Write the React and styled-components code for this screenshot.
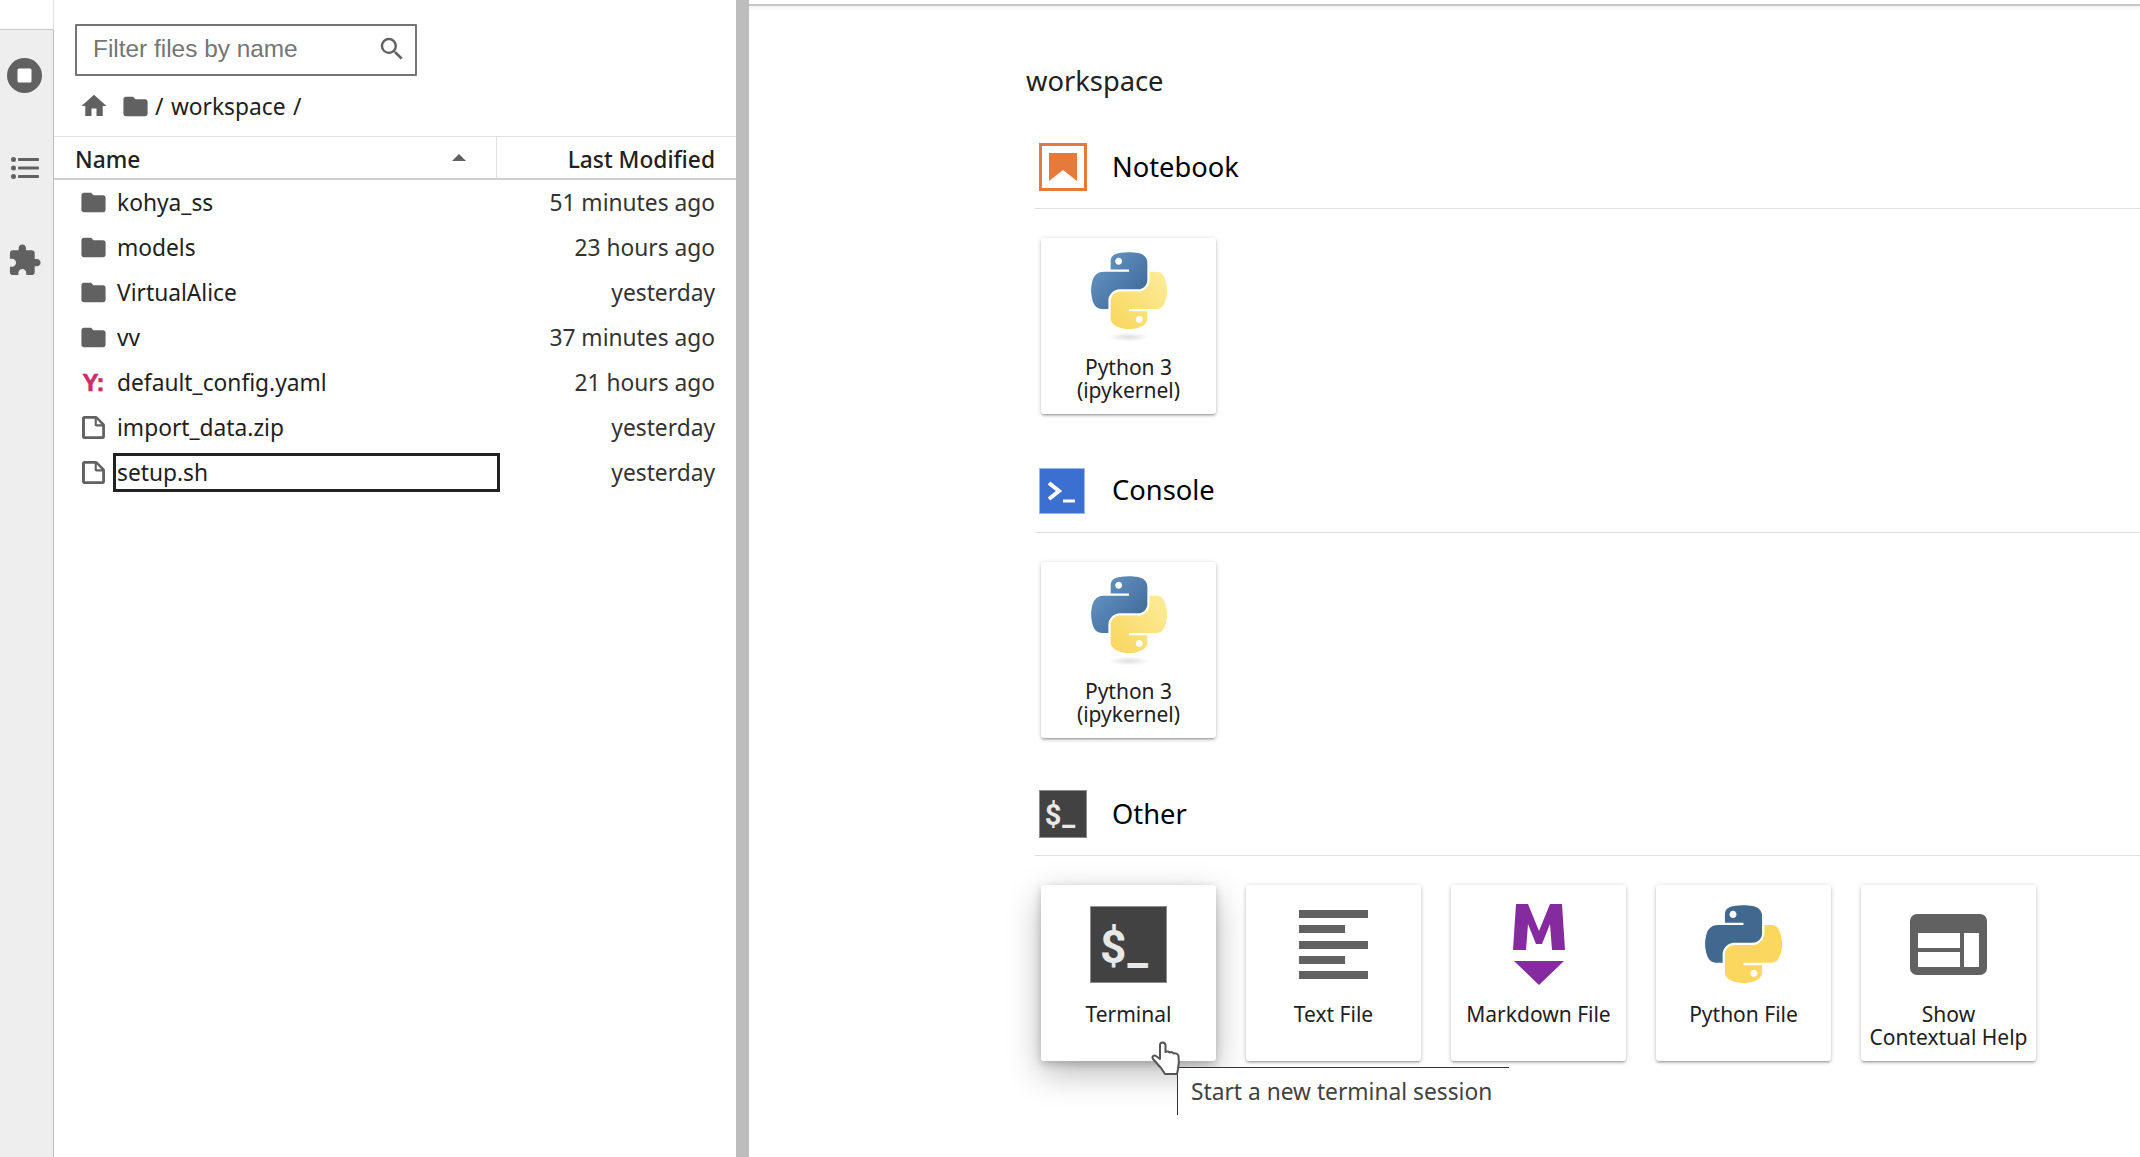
import React from 'react'
import styled, { createGlobalStyle } from 'styled-components'

const GlobalStyle = createGlobalStyle`
html, body {
  margin: 0;
  height: 100%;
  overflow: hidden;
  background: #fff;
}
#root {
  height: 100%;
}
* {
  box-sizing: border-box;
}
`

const Shell = styled.div`
display: flex;
height: 100vh;
font-family: "Noto Sans", "Liberation Sans", sans-serif;
color: #212121;
`

const SideBar = styled.div`
width: 54px;
flex: none;
display: flex;
flex-direction: column;
`
const SideTop = styled.div`
height: 30px;
flex: none;
border-right: 1px solid #e0e0e0;
border-bottom: 1px solid #c8c8c8;
`
const SideTabs = styled.div`
flex: 1;
background: #eeeeee;
border-right: 1px solid #bdbdbd;
display: flex;
flex-direction: column;
align-items: center;
padding: 28px 4px 0 0;
gap: 64px;
color: #616161;
`

const FilePanel = styled.div`
width: 682px;
flex: none;
display: flex;
flex-direction: column;
`
const FilterBox = styled.div`
width: 342px;
height: 52px;
margin: 24px 0 0 21px;
border: 2px solid #757575;
border-radius: 1px;
display: flex;
align-items: center;
justify-content: space-between;
padding: 0 8px 2px 16px;
font-family: "Liberation Sans", Arial, sans-serif;
font-size: 24.4px;
color: #757575;
`
const SearchGlyph = styled.span`
display: flex;
color: #616161;
`
const Crumbs = styled.div`
height: 60px;
display: flex;
align-items: center;
gap: 12px;
padding-left: 25px;
font-size: 22.75px;
color: #212121;
svg {
  color: #616161;
}
`
const CrumbPath = styled.span`
margin-left: -7px;
word-spacing: 1.5px;
`
const TableHead = styled.div`
height: 44px;
display: flex;
border-top: 1px solid #e0e0e0;
border-bottom: 2px solid #cfcfcf;
font-size: 22.75px;
font-weight: 500;
`
const NameHead = styled.div`
width: 443px;
flex: none;
display: flex;
align-items: center;
justify-content: space-between;
padding: 3px 30px 0 21px;
border-right: 1px solid #e0e0e0;
`
const SortCaret = styled.span`
width: 0;
height: 0;
margin-top: -4px;
border-left: 7px solid transparent;
border-right: 7px solid transparent;
border-bottom: 7px solid #616161;
`
const ModifiedHead = styled.div`
flex: 1;
display: flex;
align-items: center;
justify-content: flex-end;
padding: 3px 21px 0 0;
`
const FileList = styled.div`
display: flex;
flex-direction: column;
`
const FileRow = styled.div`
height: 45px;
display: flex;
align-items: center;
padding: 0 21px 0 25px;
font-size: 22.75px;
color: #212121;
`
const RowIcon = styled.span`
width: 29px;
height: 29px;
flex: none;
display: flex;
align-items: center;
justify-content: center;
color: #616161;
`
const YamlGlyph = styled.span`
font-family: "Liberation Sans", Arial, sans-serif;
font-weight: 700;
font-size: 24px;
line-height: 1;
color: #cb2e63;
-webkit-text-stroke: 0.6px #cb2e63;
`
const FileName = styled.span`
width: 387px;
height: 39px;
flex: none;
margin-left: 5px;
display: flex;
align-items: center;
padding-left: 1px;
border: 3px solid ${({ $focused }) => ($focused ? '#222' : 'transparent')};
`
const FileDate = styled.span`
flex: 1;
text-align: right;
color: #333;
`

const Splitter = styled.div`
width: 13px;
flex: none;
background: #bdbdbd;
`

const Launcher = styled.main`
flex: 1;
min-width: 0;
margin-top: 4px;
border-top: 2px solid #c6c6c6;
box-shadow: inset 0 4px 4px -3px rgba(0, 0, 0, 0.08);
padding-left: 286px;
`
const Cwd = styled.div`
margin: 52px 0 0 -9px;
height: 45px;
display: flex;
align-items: center;
font-size: 27.3px;
line-height: 45px;
color: #212121;
`
const Section = styled.section`
margin-bottom: 52.5px;
&:first-of-type {
  margin-top: 40px;
}
`
const SectionHead = styled.div`
display: flex;
align-items: center;
gap: 25px;
height: 66px;
padding: 0 0 17px 4px;
border-bottom: 1px solid #e0e0e0;
`
const SectionTitle = styled.h2`
margin: -2px 0 0;
font-size: 27.3px;
font-weight: 400;
color: #000;
`
const CardRow = styled.div`
display: flex;
gap: 30px;
padding: 29px 0 0 6px;
`
const Card = styled.div`
position: relative;
width: 175px;
height: 176px;
flex: none;
display: flex;
flex-direction: column;
align-items: center;
background: #fff;
border-radius: 3px;
box-shadow: ${({ $hover }) =>
  $hover
    ? '0 12px 34px rgba(0,0,0,.28), 0 3px 8px rgba(0,0,0,.2)'
    : '0 1px 5px rgba(0,0,0,.2), 0 2px 2px rgba(0,0,0,.14), 0 3px 1px -2px rgba(0,0,0,.12)'};
`
const CardIcon = styled.div`
height: 118px;
flex: none;
display: flex;
align-items: center;
justify-content: center;
`
const CardLabel = styled.div`
width: 100%;
text-align: center;
font-size: 21px;
line-height: 23px;
color: #212121;
white-space: pre-line;
`
const TerminalTile = styled.div`
display: flex;
align-items: flex-end;
justify-content: center;
width: ${({ $size }) => $size}px;
height: ${({ $size }) => $size}px;
padding-right: ${({ $size }) => Math.round($size * 0.1)}px;
background: #424242;
border: 1px solid #8d8d8d;
color: #e8e8e8;
font-family: Roboto, "Liberation Sans", sans-serif;
font-weight: 700;
font-size: ${({ $size }) => Math.round($size * 0.6)}px;
line-height: ${({ $size }) => Math.round($size * 0.89)}px;
letter-spacing: 1px;
`
const ConsoleTile = styled.div`
width: 46px;
height: 46px;
margin-right: 2px;
background: #3b6fd0;
border: 1px solid #9db8e8;
`

const TooltipBox = styled.div`
position: absolute;
left: 136px;
top: 182px;
width: 332px;
height: 48px;
background: #fff;
border-top: 1px solid #333;
border-left: 1px solid #333;
padding: 9px 0 0 13px;
font-size: 22.75px;
line-height: 30px;
color: #424242;
white-space: nowrap;
z-index: 2;
`
const Pointer = styled.svg`
position: absolute;
left: 109px;
top: 156px;
z-index: 3;
`

const MIcon = ({ d, size = 24, box = 24 }) => (
  <svg width={size} height={size} viewBox={`0 0 ${box} ${box}`} fill="currentColor">
    <path d={d} />
  </svg>
)

const folderPath = 'M10 4H4c-1.1 0-1.99.9-1.99 2L2 18c0 1.1.9 2 2 2h16c1.1 0 2-.9 2-2V8c0-1.1-.9-2-2-2h-8l-2-2z'
const homePath = 'M10 20v-6h4v6h5v-8h3L12 3 2 12h3v8z'
const searchPath = 'M15.5 14h-.79l-.28-.27A6.47 6.47 0 0 0 16 9.5 6.5 6.5 0 1 0 9.5 16c1.61 0 3.09-.59 4.23-1.57l.27.28v.79l5 4.99L20.49 19l-4.99-5zm-6 0C7.01 14 5 11.99 5 9.5S7.01 5 9.5 5 14 7.01 14 9.5 11.99 14 9.5 14z'
const filePath = 'M19.3 8.2l-5.5-5.5c-.3-.3-.7-.5-1.2-.5H3.9c-.8.1-1.6.9-1.6 1.8v14.1c0 .9.7 1.6 1.6 1.6h14.2c.9 0 1.6-.7 1.6-1.6V9.4c.1-.5-.1-.9-.4-1.2zm-5.8-3.3l3.4 3.6h-3.4V4.9zm3.9 12.7H4.7c-.1 0-.2 0-.2-.2V4.7c0-.2.1-.3.2-.3h7.2v4.4s0 .8.3 1.1c.3.3 1.1.3 1.1.3h4.3v7.2s-.1.2-.2.2z'
const extensionPath = 'M20.5 11H19V7c0-1.1-.9-2-2-2h-4V3.5C13 2.12 11.88 1 10.5 1S8 2.12 8 3.5V5H4c-1.1 0-1.99.9-1.99 2v3.8H3.5c1.49 0 2.7 1.21 2.7 2.7s-1.21 2.7-2.7 2.7H2V20c0 1.1.9 2 2 2h3.8v-1.5c0-1.49 1.21-2.7 2.7-2.7 1.49 0 2.7 1.21 2.7 2.7V22H17c1.1 0 2-.9 2-2v-4h1.5c1.38 0 2.5-1.12 2.5-2.5S21.88 11 20.5 11z'

const pyTop = 'M54.9.001c-4.58.022-8.96.413-12.8 1.095C30.8 3.094 28.7 7.28 28.7 15.01v10.21h26.8v3.4H18.7c-7.78 0-14.6 4.68-16.7 13.57-2.45 10.2-2.56 16.57 0 27.2 1.9 7.94 6.45 13.57 14.2 13.57h9.2V70.77c0-8.84 7.65-16.65 16.7-16.65h26.8c7.45 0 13.4-6.13 13.4-13.62V15.01c0-7.27-6.13-12.72-13.4-13.93C64.9.31 59.5-.02 54.9.001zM40.4 8.22c2.77 0 5.03 2.3 5.03 5.13 0 2.82-2.26 5.11-5.03 5.11-2.78 0-5.03-2.29-5.03-5.11 0-2.83 2.25-5.13 5.03-5.13z'
const pyBottom = 'M85.6 28.66v11.9c0 9.22-7.82 16.98-16.7 16.98H42.1c-7.34 0-13.4 6.28-13.4 13.62v25.5c0 7.26 6.31 11.53 13.4 13.62 8.49 2.5 16.63 2.95 26.8 0 6.75-1.95 13.4-5.89 13.4-13.62V86.49H55.5v-3.4h40.2c7.79 0 10.7-5.43 13.4-13.57 2.8-8.39 2.68-16.45 0-27.2-1.92-7.74-5.6-13.57-13.4-13.57H85.6zM70.5 93.22c2.78 0 5.03 2.28 5.03 5.1 0 2.83-2.25 5.13-5.03 5.13-2.77 0-5.03-2.3-5.03-5.13 0-2.82 2.26-5.1 5.03-5.1z'

const KernelLogo = ({ id }) => (
  <svg width="76" height="90" viewBox="0 0 111 131">
    <defs>
      <linearGradient id={`${id}b`} x1="0" y1="0" x2="1" y2="1">
        <stop offset="0" stopColor="#6b9bcb" />
        <stop offset="1" stopColor="#38628f" />
      </linearGradient>
      <linearGradient id={`${id}y`} x1="1" y1="0" x2="0" y2="1">
        <stop offset="0" stopColor="#fdec9b" />
        <stop offset="1" stopColor="#f8d65c" />
      </linearGradient>
      <radialGradient id={`${id}s`}>
        <stop offset="0" stopColor="#000" stopOpacity=".13" />
        <stop offset="1" stopColor="#000" stopOpacity="0" />
      </radialGradient>
    </defs>
    <path d={pyTop} fill={`url(#${id}b)`} />
    <path d={pyBottom} fill={`url(#${id}y)`} />
    <ellipse cx="55.5" cy="124" rx="30" ry="6.5" fill={`url(#${id}s)`} />
  </svg>
)

const PythonFileIcon = () => (
  <svg width="77" height="78" viewBox="0 0 111 112">
    <path d={pyTop} fill="#41688f" />
    <path d={pyBottom} fill="#fbd760" />
  </svg>
)

const NotebookIcon = () => (
  <svg width="48" height="48" viewBox="0 0 48 48">
    <rect x="1.5" y="1.5" width="45" height="45" fill="#fff" stroke="#e67a3c" strokeWidth="3" />
    <path d="M10 10h28v28L24 27 10 38z" fill="#e67a3c" />
  </svg>
)

const ConsoleIcon = () => (
  <ConsoleTile>
    <svg width="44" height="44" viewBox="0 0 44 44" fill="none" stroke="#fff">
      <path d="M9 14l10 8-10 8" strokeWidth="4" />
      <path d="M23 32h12" strokeWidth="3" />
    </svg>
  </ConsoleTile>
)

const TextFileIcon = () => (
  <svg width="69" height="69" viewBox="0 0 69 69" fill="#616161">
    <rect y="0" width="69" height="8" />
    <rect y="15" width="46" height="8" />
    <rect y="31" width="69" height="8" />
    <rect y="46" width="46" height="8" />
    <rect y="61" width="69" height="8" />
  </svg>
)

// the M and the arrow are one logo
const MarkdownIcon = () => (
  <svg width="52" height="81" viewBox="0 0 52 81" fill="#852a9f">
    <polygon points="3,0 15,0 26,27 37,0 49,0 52,46 39,46 37,20 29,40 23,40 15,20 13,46 0,46" />
    <polygon points="1,57 51,57 26,81" />
  </svg>
)

const HelpIcon = () => (
  <svg width="77" height="61" viewBox="0 0 77 61">
    <rect width="77" height="61" rx="7" fill="#616161" />
    <rect x="8" y="19" width="42" height="15" fill="#fff" />
    <rect x="8" y="38" width="42" height="15" fill="#fff" />
    <rect x="54" y="19" width="15" height="34" fill="#fff" />
  </svg>
)

const files = [
  { name: 'kohya_ss', date: '51 minutes ago', kind: 'folder' },
  { name: 'models', date: '23 hours ago', kind: 'folder' },
  { name: 'VirtualAlice', date: 'yesterday', kind: 'folder' },
  { name: 'vv', date: '37 minutes ago', kind: 'folder' },
  { name: 'default_config.yaml', date: '21 hours ago', kind: 'yaml' },
  { name: 'import_data.zip', date: 'yesterday', kind: 'file' },
  { name: 'setup.sh', date: 'yesterday', kind: 'file', focused: true },
]

const otherCards = [
  { label: 'Text File', icon: <TextFileIcon /> },
  { label: 'Markdown File', icon: <MarkdownIcon /> },
  { label: 'Python File', icon: <PythonFileIcon /> },
  { label: 'Show\nContextual Help', icon: <HelpIcon /> },
]

const fileIcon = (kind) => {
  if (kind === 'folder') return <MIcon d={folderPath} size={29} />
  if (kind === 'yaml') return <YamlGlyph>Y:</YamlGlyph>
  return <MIcon d={filePath} size={29} box={22} />
}

const App = () => {
  return (
    <Shell>
      <GlobalStyle />
      <SideBar>
        <SideTop />
        <SideTabs>
          <svg width="35" height="35" viewBox="0 0 35 35">
            <circle cx="17.5" cy="17.5" r="17.5" fill="#616161" />
            <rect x="10.5" y="10.5" width="14" height="14" rx="1.5" fill="#fff" />
          </svg>
          <svg width="28" height="22" viewBox="0 0 28 22" fill="#616161">
            <circle cx="2.5" cy="2.5" r="2.5" />
            <circle cx="2.5" cy="11" r="2.5" />
            <circle cx="2.5" cy="19.5" r="2.5" />
            <rect x="7" y="1" width="21" height="3" rx="1" />
            <rect x="7" y="9.5" width="21" height="3" rx="1" />
            <rect x="7" y="18" width="21" height="3" rx="1" />
          </svg>
          <MIcon d={extensionPath} size={35} />
        </SideTabs>
      </SideBar>

      <FilePanel>
        <FilterBox>
          Filter files by name
          <SearchGlyph><MIcon d={searchPath} size={30} /></SearchGlyph>
        </FilterBox>
        <Crumbs>
          <MIcon d={homePath} size={30} />
          <MIcon d={folderPath} size={29} />
          <CrumbPath>/ workspace /</CrumbPath>
        </Crumbs>
        <TableHead>
          <NameHead>Name<SortCaret /></NameHead>
          <ModifiedHead>Last Modified</ModifiedHead>
        </TableHead>
        <FileList>
          {files.map((f) => (
            <FileRow key={f.name}>
              <RowIcon>{fileIcon(f.kind)}</RowIcon>
              <FileName $focused={f.focused}>{f.name}</FileName>
              <FileDate>{f.date}</FileDate>
            </FileRow>
          ))}
        </FileList>
      </FilePanel>

      <Splitter />

      <Launcher>
        <Cwd>workspace</Cwd>

        <Section>
          <SectionHead><NotebookIcon /><SectionTitle>Notebook</SectionTitle></SectionHead>
          <CardRow>
            <Card>
              <CardIcon><KernelLogo id="nb" /></CardIcon>
              <CardLabel>{'Python 3\n(ipykernel)'}</CardLabel>
            </Card>
          </CardRow>
        </Section>

        <Section>
          <SectionHead><ConsoleIcon /><SectionTitle>Console</SectionTitle></SectionHead>
          <CardRow>
            <Card>
              <CardIcon><KernelLogo id="con" /></CardIcon>
              <CardLabel>{'Python 3\n(ipykernel)'}</CardLabel>
            </Card>
          </CardRow>
        </Section>

        <Section>
          <SectionHead>
            <TerminalTile $size={48}>$_</TerminalTile>
            <SectionTitle>Other</SectionTitle>
          </SectionHead>
          <CardRow>
            <Card $hover>
              <CardIcon><TerminalTile $size={77}>$_</TerminalTile></CardIcon>
              <CardLabel>Terminal</CardLabel>
              <TooltipBox>Start a new terminal session</TooltipBox>
              <Pointer width="32" height="34" viewBox="0 0 32 34">
                <path
                  d="M11 27 3 18c-1.500-2.500 1-4.500 3-3l4 3V4c0-3.500 5-3.500 5.500 0v7c1.500-1 3.500-.5 4 .5 1.500-.8 3.500-.3 4 1 2-.5 4.500 0 5 2.500.5 3 .5 8-.5 13l-1 5H15z"
                  fill="#fff"
                  stroke="#555"
                  strokeWidth="2"
                  strokeLinejoin="round"
                />
              </Pointer>
            </Card>
            {otherCards.map((c) => (
              <Card key={c.label}>
                <CardIcon>{c.icon}</CardIcon>
                <CardLabel>{c.label}</CardLabel>
              </Card>
            ))}
          </CardRow>
        </Section>
      </Launcher>
    </Shell>
  )
}

export default App
